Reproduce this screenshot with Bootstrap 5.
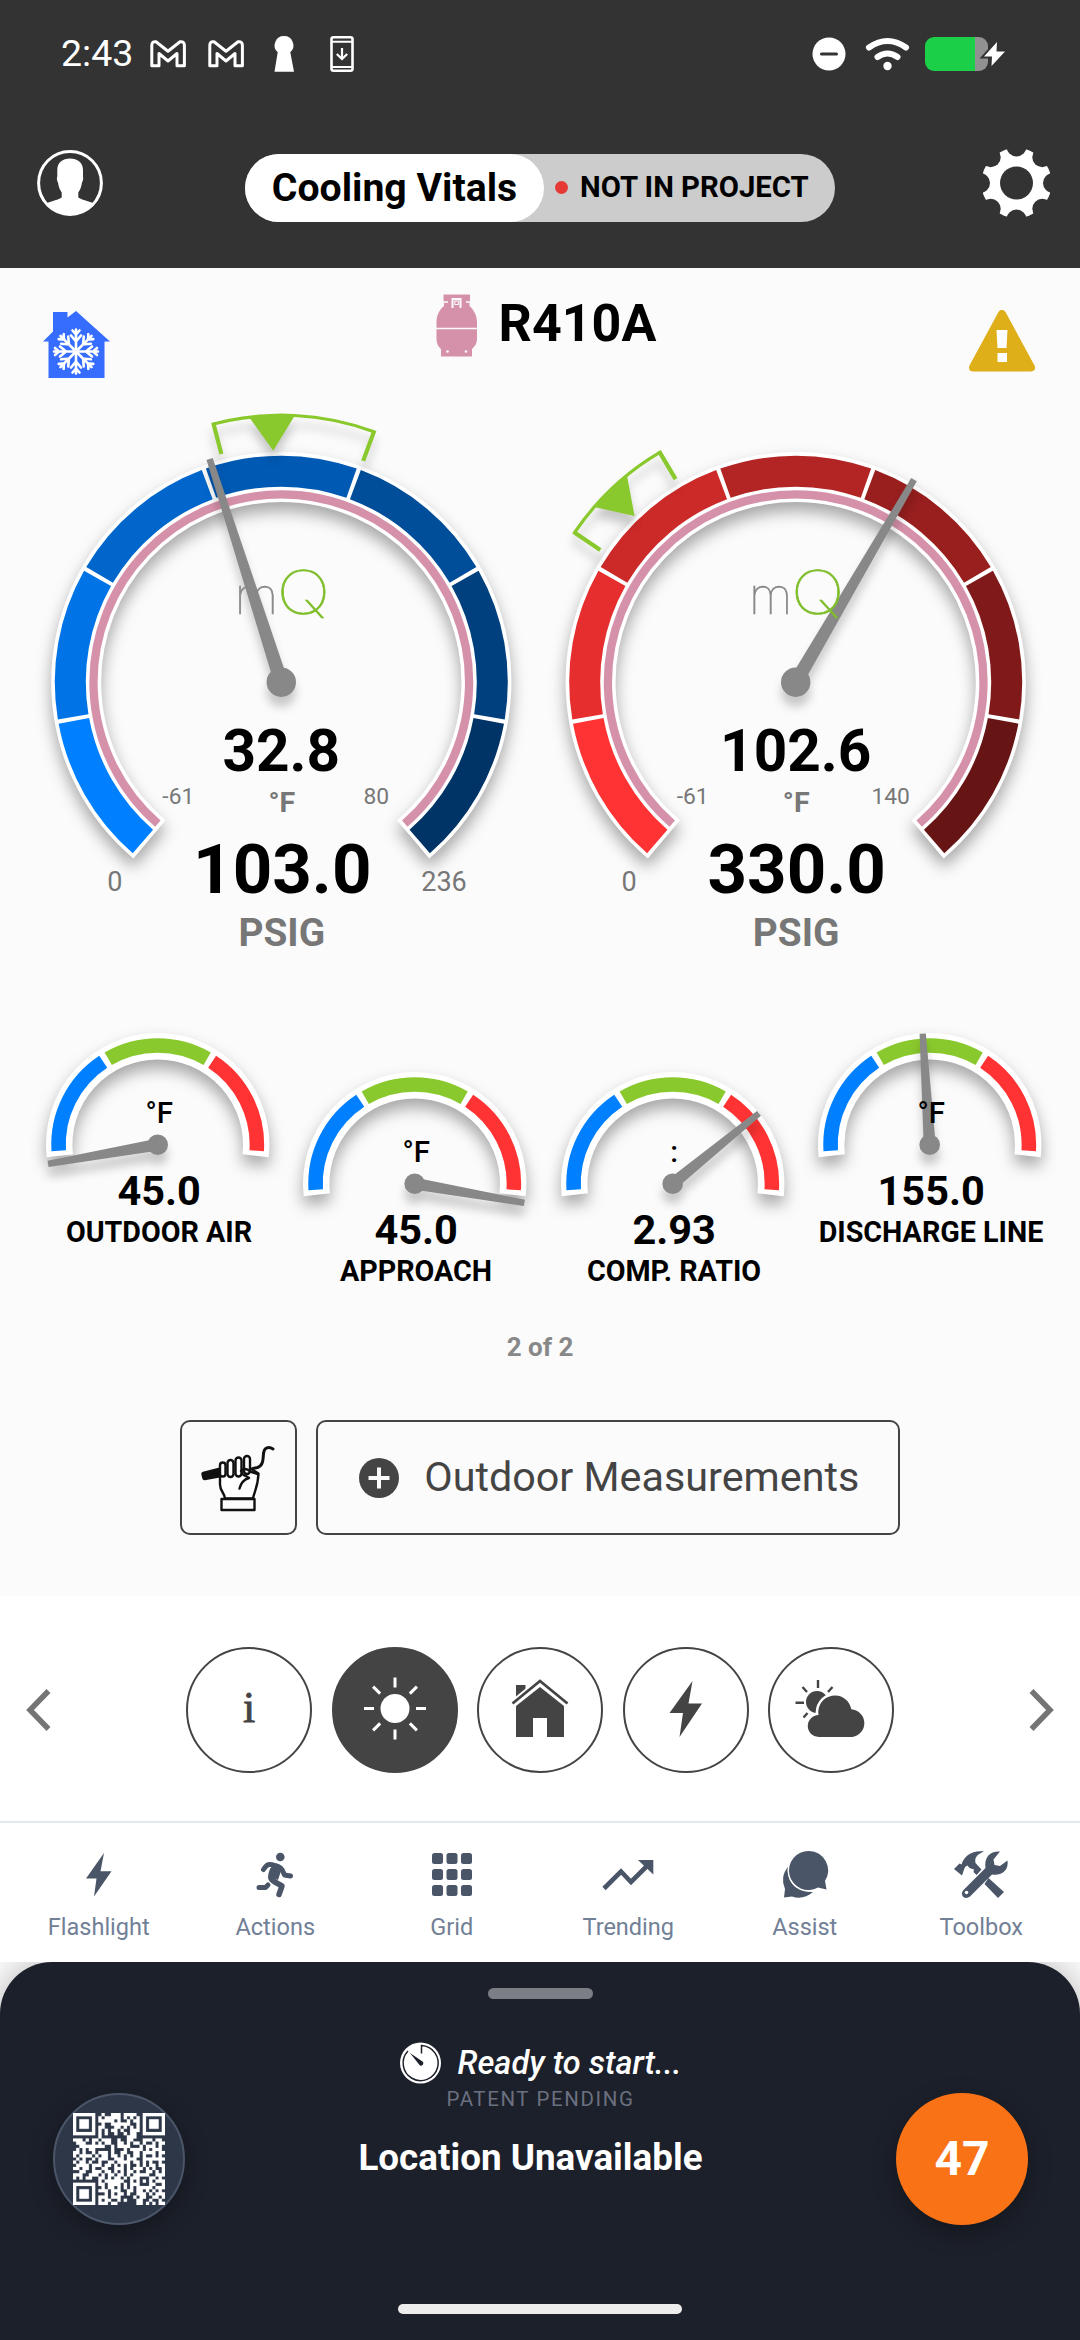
<!DOCTYPE html>
<html lang="en">
<head>
<meta charset="utf-8">
<meta name="viewport" content="width=device-width, initial-scale=1">
<title>Cooling Vitals</title>
<link href="https://cdn.jsdelivr.net/npm/bootstrap@5.3.0/dist/css/bootstrap.min.css" rel="stylesheet">
<style>
  body { font-family: Roboto, "Liberation Sans", sans-serif; width: 1080px; height: 2340px; background: #fff; color: #000; overflow: hidden; }
  svg { display: block; flex-shrink: 0; }
  .app-head { height: 268px; background: #333; color: #fff; }
  .status-row { height: 108px; padding: 0 75px 0 61px; }
  .clock { font-size: 37.5px; line-height: 1; width: 71px; }
  .title-row { height: 160px; padding: 41px 30px 0 37px; }
  .pill { height: 68px; background: #ccc; border-radius: 34px; color: #000; width: 590px; margin-left: -6px; margin-top: 5px; }
  .pill-main { height: 68px; width: 299px; border-radius: 34px; background: #fff; font-size: 39.2px; font-weight: 700; }
  .pill-side { font-size: 29.3px; font-weight: 700; }
  .dot { width: 13px; height: 13px; border-radius: 50%; background: #e53935; margin: 0 12px 2px 11px; }
  .vitals { height: 1328px; background: #fbfbfb; }
  .unit-row { height: 132px; padding: 0 45px 0 43px; }
  .mode-icon { margin-top: 43px; }
  .warn-icon { margin-top: 41.5px; }
  .unit-title { margin: 26px 0 0 13px; }
  .refrigerant { font-size: 52px; font-weight: 700; line-height: 1; margin: 4px 0 0 22px; }
  .dials { height: 560px; padding-left: 25px; }
  .minis { height: 320px; padding: 65px 0 0 29px; }
  .mini.low { margin-top: 39px; }
  svg text { text-anchor: middle; }
  .brand { font-family: Inter, Lato, sans-serif; font-weight: 100; stroke-width: .7px; }
  .cast { filter: drop-shadow(0 9px 8px rgba(0,0,0,.34)); }
  .cast-soft { filter: drop-shadow(0 10px 5px rgba(0,0,0,.2)); }
  .pager { font-size: 26px; font-weight: 700; color: #888; line-height: 1; padding-top: 54px; }
  .act { border: 2px solid #444; border-radius: 10px; height: 115px; color: #444; background: transparent; }
  .act-hand { width: 117px; }
  .act-main { width: 584px; font-size: 41.3px; }
  .act-main svg { margin: 0 25px 0 41px; }
  .actions { padding-top: 60px; gap: 19.5px; }
  .pages { height: 225px; padding: 3px 26px 0; }
  .rounds { gap: 19.5px; }
  .round { width: 126px; height: 126px; border-radius: 50%; border: 2px solid #444; }
  .round.on { background: #444; }
  .info { font: 400 44px "Liberation Serif", serif; color: #444; -webkit-text-stroke: .9px #444; padding-bottom: 6px; }
  .tabs { height: 141px; border-top: 2px solid #e2e8f0; padding: 0 10.5px; position: relative; z-index: 2; background: #fff; }
  .tab { flex: 1 1 0; color: #718096; font-size: 23.5px; line-height: 1; padding-top: 19px; }
  .tab svg { margin-bottom: 9.5px; fill: #4a5568; }
  .sheet { height: 378px; background: #1c202a; border-radius: 52px 52px 0 0; box-shadow: 0 0 42px rgba(0,0,0,.32); color: #fff; }
  .grip { width: 105px; height: 11px; border-radius: 6px; background: #7b7e85; margin-top: 26px; }
  .sheet-body { padding: 42px 52px 0 53px; height: 200px; }
  .disc { width: 132px; height: 132px; border-radius: 50%; margin-top: 52px; box-shadow: 0 8px 24px rgba(0,0,0,.3); }
  .disc.scan { background: #2d3748; border: 2px solid #4a5568; }
  .disc.count { background: #f97316; font-size: 48px; font-weight: 700; }
  .ready { font-size: 32.6px; font-weight: 500; font-style: italic; line-height: 1; gap: 17px; margin-top: 1px; }
  .patent { font-size: 20.5px; letter-spacing: 1.6px; color: #6b7080; line-height: 1; margin-top: 5px; }
  .place { font-size: 36.8px; font-weight: 700; line-height: 1; margin: 30px 20px 0 0; }
  .homebar { width: 284px; height: 10px; border-radius: 5px; background: #ededed; margin-top: 105px; }
</style>
<script src="https://cdn.jsdelivr.net/npm/bootstrap@5.3.0/dist/js/bootstrap.bundle.min.js"></script>
</head>
<body>
<header class="app-head">
  <div class="status-row d-flex align-items-center justify-content-between">
    <div class="d-flex align-items-center">
      <span class="clock">2:43</span>
      <svg class="ms-3" width="206" height="40" viewBox="147 35 206 40" fill="none" stroke="#fff" stroke-width="3">
        <g id="mail" stroke-linejoin="round"><path d="M150.8 46.5Q150.8 42 155 42.8L167 52.3L179 42.8Q183.4 42 183.4 46.5V66.8H176V54.5L167 62L158 54.5V66.8H150.8Z"/></g>
        <use href="#mail" x="58"/>
        <path d="M283 37a9.3 9.3 0 0 1 6.300 16.200L293 72.700H273.500L276.700 53.200A9.300 9.300 0 0 1 283 37Z" fill="#fff" stroke="none"/>
        <rect x="330.500" y="38.200" width="21" height="33.600" rx="2" stroke-width="2.600"/>
        <path d="M330 42.700h22M330 68h22" stroke-width="2"/>
        <path d="M341 49v10M335.800 55l5.200 5 5.200-5" stroke-width="2.200"/>
      </svg>
    </div>
    <svg width="194" height="40" viewBox="811 34 194 40" fill="#fff">
      <circle cx="829" cy="54" r="16.500"/><path d="M821.500 54h15" stroke="#333" stroke-width="3" stroke-linecap="round"/>
      <g fill="none" stroke="#fff" stroke-width="6" stroke-linecap="round"><path d="M869 47.500Q887.500 34.500 906 47.500"/><path d="M877.500 57Q887.500 50 897.500 57"/></g>
      <circle cx="887.500" cy="66" r="4.200"/>
      <path d="M975 37h4a9 9 0 0 1 9 9v16a9 9 0 0 1-9 9h-4Z" fill="#919191"/>
      <path d="M975 37v34h-41a9 9 0 0 1-9-9v-16a9 9 0 0 1 9-9Z" fill="#1bcf48"/>
      <path d="M997 42L984 56.500H992L991.500 66L1005 51.500H996.500Z" stroke="#333" stroke-width="4" paint-order="stroke"/>
    </svg>
  </div>
  <div class="title-row d-flex justify-content-between align-items-start">
    <svg width="66" height="68" viewBox="36.500 149 66 68" fill="#fff">
      <circle cx="69.500" cy="183" r="31.400" fill="none" stroke="#fff" stroke-width="3"/>
      <path d="M69.500 158.500C77 158.500 82.500 162.500 82.500 170V176.500C83 178 82.500 181 81.500 182.500C81 187 79.500 190 77.800 192.500V197.500C81 200 87 200.500 93.500 203.500A31.500 31.500 0 0 1 45.500 203.500C52 200.500 58 200 61.200 197.500V192.500C59.500 190 58 187 57.500 182.500C56.500 181 56 178 56.800 176.500V170C56.800 162.500 62 158.500 69.500 158.500Z"/>
    </svg>
    <div class="pill d-flex align-items-center">
      <div class="pill-main d-flex align-items-center justify-content-center">Cooling Vitals</div>
      <span class="dot"></span>
      <span class="pill-side">NOT IN PROJECT</span>
    </div>
    <svg id="gear" width="67" height="68" viewBox="-33.500 -34 67 68"></svg>
  </div>
</header>

<main class="vitals">
  <div class="unit-row d-flex justify-content-between align-items-start">
    <svg class="mode-icon" width="67" height="67" viewBox="43 311 67 67">
      <path d="M53 312H67.500V317.500L76 311L110 341.500H104.500V378H48.500V341.500H43L53 331.500Z" fill="#366dff"/>
      <g id="flake" stroke="#fff" stroke-width="2.600" stroke-linecap="round" fill="none" transform="translate(76 351.500)"></g>
    </svg>
    <div class="unit-title d-flex align-items-start">
      <svg width="41" height="64" viewBox="437 294 41 64" fill="#d691aa">
        <path d="M444.500 294.500H471V302.500H470.500V306C475 310 478 316 478 322V338C478 344 476 346 473 349V356.500H442V349C439 346 437.500 344 437.500 338V322C437.500 316 440 310 445 306V302.500H444.500Z"/>
        <path d="M437 328.500H478M444 302H449M467 302H471.500" stroke="#fbfbfb" stroke-width="1.600"/>
        <path d="M453.500 308V299H461.500V308" fill="none" stroke="#fbfbfb" stroke-width="2"/><rect x="455.800" y="301" width="3.600" height="3.500" stroke="#fbfbfb"/>
        <circle cx="448.500" cy="351.500" r="1.300" fill="#fbfbfb"/><circle cx="467" cy="351.500" r="1.300" fill="#fbfbfb"/>
      </svg>
      <span class="refrigerant">R410A</span>
    </div>
    <svg class="warn-icon" width="66" height="62" viewBox="969.500 309.500 66 62">
      <path d="M1002.500 313.500L1031.500 367H973.500Z" fill="#deaf18" stroke="#deaf18" stroke-width="8" stroke-linejoin="round"/>
      <path d="M997 329.500H1008L1007 347.500H998ZM998 352.500H1007.500V361.500H998Z" fill="#fff"/>
    </svg>
  </div>
  <div class="dials d-flex">
    <svg id="suction" width="515" height="560" viewBox="-256.300 -282.200 515 560"></svg>
    <svg id="liquid" width="515" height="560" viewBox="-255.700 -282.200 515 560"></svg>
  </div>
  <div class="minis d-flex" id="minis"></div>
  <div class="pager text-center">2 of 2</div>
  <div class="actions d-flex justify-content-center">
    <button class="act act-hand p-0 d-flex align-items-center justify-content-center">
      <svg width="76" height="68" viewBox="200 1441.500 76 68" fill="none" stroke="#111" stroke-width="2.400" stroke-linejoin="round" stroke-linecap="round">
        <path d="M203.500 1471.500L221 1467V1472.500L204.500 1475.500Z" fill="#000" stroke-width="4.500"/>
        <path d="M273 1446.500C268 1443 264 1446 263.500 1451C263 1458 263 1463 257.500 1465L253 1466" stroke-width="3"/>
        <path d="M220 1472V1482C220 1489 225 1491 225 1496H253C254 1490 258 1484 258.500 1471L249 1465" fill="#fff"/>
        <g fill="#fff"><rect x="220" y="1460" width="5.500" height="14" rx="2.700"/><rect x="227.500" y="1457.500" width="6" height="17" rx="3"/><rect x="235.500" y="1455" width="6" height="19" rx="3"/><rect x="244" y="1453.500" width="6" height="18" rx="3"/></g>
        <path d="M241 1468.500C243 1465.500 247 1466 250 1469L257.500 1471.500M242 1470C242 1473 246 1473 249 1475.500C244 1477 241 1480 239.500 1486"/>
        <rect x="221.500" y="1496.500" width="33" height="11"/>
      </svg>
    </button>
    <button class="act act-main p-0 d-flex align-items-center">
      <svg width="40" height="40" viewBox="0 0 40 40"><circle cx="20" cy="20" r="20" fill="#444"/><path d="M20 9.500V30.500M9.500 20H30.500" stroke="#fbfbfb" stroke-width="4"/></svg>
      <span>Outdoor Measurements</span>
    </button>
  </div>
</main>

<section class="pages d-flex align-items-center justify-content-between">
  <svg width="25" height="42" viewBox="0 0 25 42" fill="none" stroke="#757575" stroke-width="5.500"><path d="M22.500 2L4 21L22.500 40"/></svg>
  <div class="rounds d-flex">
    <div class="round info d-flex align-items-center justify-content-center">i</div>
    <div class="round on d-flex align-items-center justify-content-center"><svg id="sun" width="66" height="66" viewBox="-33 -31.500 66 66"></svg></div>
    <div class="round d-flex align-items-center justify-content-center">
      <svg width="58" height="64" viewBox="511 1678 58 64" fill="#444">
        <path d="M516 1685H525.500V1694L516 1701ZM540 1687L564 1706V1737H547V1718H533V1737H516V1706Z"/>
        <path d="M512.500 1703.500L540 1681L567.500 1703.500" fill="none" stroke="#fff" stroke-width="6.500"/>
        <path d="M512.500 1703.500L540 1681L567.500 1703.500" fill="none" stroke="#444" stroke-width="2.800"/>
      </svg>
    </div>
    <div class="round d-flex align-items-center justify-content-center">
      <svg width="34" height="58" viewBox="669 1681 34 58" fill="#444"><path d="M692.500 1681L688.500 1703.500H702L679.500 1737L683 1713H669.500Z"/></svg>
    </div>
    <div class="round d-flex align-items-center justify-content-center">
      <svg width="74" height="62" viewBox="794 1679 74 62" fill="#444">
        <circle cx="817" cy="1702" r="11"/>
        <path d="M818 1680V1688M795.500 1702.700H804M802.500 1687L807 1692M832.500 1687L828 1692M803.500 1717.500L807.500 1713" stroke="#444" stroke-width="2.400"/>
        <path d="M819 1737A11 11 0 0 1 818.500 1715A16.600 16.600 0 0 1 851.300 1709.200A14 14 0 0 1 852.500 1737Z" stroke="#fff" stroke-width="5" paint-order="stroke"/>
      </svg>
    </div>
  </div>
  <svg width="25" height="42" viewBox="0 0 25 42" fill="none" stroke="#757575" stroke-width="5.500"><path d="M2.500 2L21 21L2.500 40"/></svg>
</section>

<nav class="tabs d-flex">
  <div class="tab d-flex flex-column align-items-center">
    <svg width="56" height="64" viewBox="71 1842 56 64"><path d="M104 1853L100.500 1871.300H111.500L94 1896.500L96.500 1878.500H86Z"/></svg>Flashlight
  </div>
  <div class="tab d-flex flex-column align-items-center">
    <svg width="56" height="64" viewBox="246 1842 56 64"><circle cx="279.300" cy="1857" r="4.300"/>
      <path d="M262.500 1869.500C266 1864 268 1863.500 274 1865.500C279 1867 281 1868 283.500 1875L289.500 1876M258 1887.500H264.500L267 1885" fill="none" stroke="#4a5568" stroke-width="5" stroke-linecap="round" stroke-linejoin="round"/>
      <path d="M271 1865L281 1868L277 1880L268 1877Z"/>
      <path d="M271.500 1870C269 1877 269 1879 273 1881.500L281 1886L278 1894.500" fill="none" stroke="#4a5568" stroke-width="5.500" stroke-linecap="round" stroke-linejoin="round"/></svg>Actions
  </div>
  <div class="tab d-flex flex-column align-items-center">
    <svg width="56" height="64" viewBox="424 1842 56 64" id="gridicon"></svg>Grid
  </div>
  <div class="tab d-flex flex-column align-items-center">
    <svg width="56" height="64" viewBox="600.500 1842 56 64"><path d="M604.500 1888.500L621.500 1871.500L631.500 1882L647 1866.500" fill="none" stroke="#4a5568" stroke-width="4.600"/><path d="M638.500 1860H653.800V1874.500Z"/></svg>Trending
  </div>
  <div class="tab d-flex flex-column align-items-center">
    <svg width="56" height="64" viewBox="776.500 1842 56 64">
      <path d="M783.500 1897.500L784.500 1889A20 20 0 0 1 787.500 1867C786 1880 794 1892.500 812.500 1892C806 1897.500 799 1899 791.500 1896.500Z"/>
      <path d="M808.500 1851A19.500 19.500 0 0 1 824.500 1881L826 1889.500L817.500 1887.500A19.500 19.500 0 1 1 808.500 1851Z" stroke="#fff" stroke-width="2.600" paint-order="stroke"/></svg>Assist
  </div>
  <div class="tab d-flex flex-column align-items-center">
    <svg width="58" height="64" viewBox="952 1842 58 64">
      <path d="M988.500 1878L1004 1892L998 1898L984.500 1884Z"/>
      <path d="M954 1869L959.500 1863.500L961.500 1864.500C964 1856 972 1850 984 1851.500C976 1855 974.500 1858 975.500 1863L981.500 1869.500L976.500 1875L973.500 1872L974 1869.500L969.500 1868L967.500 1865.500C964 1867 964.500 1869 963 1872.500L962 1875.500Z"/>
      <path d="M985.500 1868C984 1857 990 1851 1000 1851.500L993.500 1859.500L994.500 1865L1000 1866L1007.500 1860.500C1009 1870 1002 1876 992 1874.500L970 1896.500C965 1900.500 959 1895 963.500 1890Z"/>
      <circle cx="966.500" cy="1892.500" r="1.800" fill="#fff"/></svg>Toolbox
  </div>
</nav>

<footer class="sheet d-flex flex-column align-items-center">
  <div class="grip"></div>
  <div class="sheet-body d-flex justify-content-between align-items-start align-self-stretch">
    <div class="disc scan d-flex align-items-center justify-content-center"><svg id="qr" width="92" height="92" viewBox="0 0 29 29"></svg></div>
    <div class="d-flex flex-column align-items-center">
      <div class="ready d-flex align-items-center">
        <svg width="41" height="42" viewBox="-20.500 -21 41 42"><circle r="20.500" fill="#fff"/><path d="M-12.500 -12A17.500 17.500 0 1 0 1 -17.400V-9.500" fill="none" stroke="#1c202a" stroke-width="1.500"/><path d="M-10.500 -10L2 -1.500A1.900 1.900 0 1 1 -1 2Z" fill="#1c202a"/></svg>
        <span>Ready to start...</span>
      </div>
      <div class="patent">PATENT PENDING</div>
      <div class="place">Location Unavailable</div>
    </div>
    <div class="disc count d-flex align-items-center justify-content-center">47</div>
  </div>
  <div class="homebar"></div>
</footer>

<script>
const rad = a => (a - 90) * Math.PI / 180;
const pt = (r, a) => (r * Math.cos(rad(a))).toFixed(2) + ' ' + (r * Math.sin(rad(a))).toFixed(2);
const arc = (r, a, b, color, w) => `<path d="M${pt(r, a)}A${r} ${r} 0 ${b - a > 180 ? 1 : 0} 1 ${pt(r, b)}" fill="none" stroke="${color}" stroke-width="${w}"/>`;
const label = (x, y, size, weight, fill, t) => `<text x="${x}" y="${y}" font-size="${size}" font-weight="${weight}" fill="${fill}">${t}</text>`;

function needle(a, len, base, tip, hub) {
  return `<g class="cast-soft"><g transform="rotate(${a})"><path d="M${-base / 2} 0L${-tip / 2} ${-len}H${tip / 2}L${base / 2} 0Z" fill="#888"/></g><circle r="${hub}" fill="#888"/></g>`;
}
function dial(id, d) {
  let s = '<g class="cast">' + arc(205.1, -140, 140, '#fff', 50) + '</g>';
  d.colors.forEach((c, i) => {
    s += arc(211, -140 + 40 * i + (i ? .55 : 1), -100 + 40 * i - (i < 6 ? .55 : 1), c, 31);
  });
  s += arc(187.8, -138.9, 138.9, '#d691aa', 8.3);
  const [a, m, b] = d.target;
  s += '<g class="cast-soft">' + arc(267, a, b, '#8ac92e', 3.2) +
    `<path d="M${pt(268.5, a)}L${pt(236, a)}M${pt(268.5, b)}L${pt(236, b)}" stroke="#8ac92e" stroke-width="4.2"/>` +
    `<path d="M${pt(267, m - 4.9)}L${pt(231.5, m)}L${pt(267, m + 4.9)}Z" fill="#8ac92e"/></g>`;
  s += needle(d.angle, 234.5, 14, 6.5, 14.7);
  s += `<text class="brand" x="-25" y="-68" font-size="50" fill="#888" stroke="#888">m</text>` +
       `<text class="brand" transform="translate(22 -68) scale(1.2 1)" font-size="60" fill="#7fbe2b" stroke="#7fbe2b">Q</text>`;
  s += label(0, 88.4, 58.5, 700, '#000', d.temp) + label(.5, 130.2, 28.5, 700, '#777', '°F') +
       label(-103, 121.8, 22.8, 400, '#777', '-61') + label(95, 121.8, 22.8, 400, '#777', d.tmax) +
       label(1, 211.2, 69, 700, '#000', d.press) + label(-166.5, 209, 27, 400, '#777', '0') +
       label(162.7, 209, 27, 400, '#777', d.pmax) + label(.5, 264, 38.8, 700, '#777', 'PSIG');
  document.getElementById(id).innerHTML = s;
}
dial('suction', { colors: ['#0080ff', '#0073e6', '#0066cc', '#0059b3', '#004d99', '#00407f', '#003366'],
  target: [-14.7, -2, 20.3], angle: -17.8, temp: '32.8', tmax: '80', press: '103.0', pmax: '236' });
dial('liquid', { colors: ['#ff3333', '#e62e2e', '#cc2929', '#b32424', '#991f1f', '#801a1a', '#661414'],
  target: [-55.9, -44.1, -30.6], angle: 30.3, temp: '102.6', tmax: '140', press: '330.0', pmax: '' });

const minis = [
  { a: -99.9, u: '°F', v: '45.0', n: 'OUTDOOR AIR' },
  { a: 99.9, u: '°F', v: '45.0', n: 'APPROACH', low: 1 },
  { a: 50.8, u: ':', v: '2.93', n: 'COMP. RATIO', low: 1 },
  { a: -3.6, u: '°F', v: '155.0', n: 'DISCHARGE LINE' }];
document.getElementById('minis').innerHTML = minis.map(m =>
  `<svg class="mini${m.low ? ' low' : ''}" width="257.3" height="235" viewBox="-128.7 -119.7 257.3 235">
   <g class="cast">${arc(98.5, -96.5, 96.5, '#fff', 26.4)}</g>
   ${arc(99.2, -93.5, -33.3, '#0080ff', 14.5)}${arc(99.2, -29.9, 29.9, '#8ac92e', 14.5)}${arc(99.2, 33.3, 93.5, '#ff3333', 14.5)}
   ${needle(m.a, 111.3, 12, 6.3, 10.3)}
   ${label(1.5, -21.7, 29.5, 500, '#000', m.u)}${label(1.5, 60.3, 41.5, 700, '#000', m.v)}${label(1.3, 97, 28.7, 700, '#000', m.n)}</svg>`).join('');

// cog with eight scalloped notches
let cog = '';
for (let i = 0; i < 8; i++) {
  cog += `<circle cx="${(36.5 * Math.sin(i * Math.PI / 4)).toFixed(2)}" cy="${(-36.5 * Math.cos(i * Math.PI / 4)).toFixed(2)}" r="10" fill="#333"/>`;
}
document.getElementById('gear').innerHTML = '<circle r="35" fill="#fff"/>' + cog + '<circle r="16.5" fill="#333"/>';

let flake = '';
for (let i = 0; i < 8; i++) flake += `<path transform="rotate(${i * 45})" d="M0 0V-22M-3.500 -21L0 -17L3.500 -21M-5 -16L0 -10L5 -16"/>`;
document.getElementById('flake').innerHTML = flake;

let rays = '<circle r="14.5" fill="#fff"/>';
for (let i = 0; i < 8; i++) rays += `<path transform="rotate(${i * 45})" d="M0 -21V-31" stroke="#fff" stroke-width="3"/>`;
document.getElementById('sun').innerHTML = rays;

let cells = '';
for (let r = 0; r < 3; r++) for (let c = 0; c < 3; c++) cells += `<rect x="${432 + c * 14.5}" y="${1853 + r * 16}" width="11" height="11" rx="2.5"/>`;
document.getElementById('gridicon').innerHTML = cells;

const code = `
1111111..1..111.1111..1111111
1.....1.1.11111.1.1.1.1.....1
1.111.1.11111.1..1.11.1.111.1
1.111.1..1..111111..1.1.111.1
1.111.1.11...11.1.1.1.1.111.1
1.....1.1.1.11.1..111.1.....1
1111111.1.1..1..1.11..1111111
........1........111.........
111.1.11.111..1..11...111.11.
.111..1.1.11..11.1.11.1..1.11
..11111111..1.1111...1.111.1.
.1.1.11.....1...1.1111.1.111.
11.1..1.111.1..11..11.1111.11
1.1111.1.11.11.1.1.11.1..1.1.
.1.1..1.111..111.111..1111111
1.11.1..1..11.1111.11.1.1..1.
.1111.111.11.1.1.1..1.1.11.11
11.11.1..11..111.1.111.1.1..1
..11..111.11.1.1.11.1..11.1.1
111..111.1.11.11.1.11111..111
1.1.11..11.1.11.1.111...11.1.
........1.111111..1.1.1.1.111
1111111.11.1111.1.111...11..1
1.....1..1.11.1.1.1.11111.111
1.111.1.111.111..11.11.1.1.1.
1.111.1...1.1.11.1..111.1.111
1.111.1.111.111....1.11..11.1
1.....1.1.11..1.1...11..1..1.
1111111.111.11......11.1.1.11`.trim().split('\n');
document.getElementById('qr').innerHTML = '<path fill="#fff" stroke="#fff" stroke-width=".06" d="' + code.map((row, y) =>
  [...row].map((c, x) => c === '1' ? `M${x} ${y}h1v1h-1z` : '').join('')).join('') + '"/>';
</script>
</body>
</html>
